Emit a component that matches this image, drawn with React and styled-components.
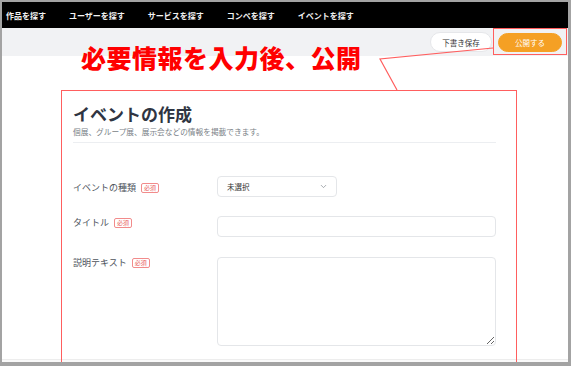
import React from "react";
import styled, { createGlobalStyle } from "styled-components";
import { ChevronDown } from "lucide-react";

const GlobalStyle = createGlobalStyle`
  * { box-sizing: border-box; }
  body {
    margin: 0;
    background: #fff;
    font-family: "Noto Sans CJK JP", "Noto Sans", sans-serif;
  }
`;

const Frame = styled.div`
  position: relative;
  width: 571px;
  height: 366px;
  border: solid #a3a3a3;
  border-width: 2px 3px 4px 2px;
  display: flex;
  flex-direction: column;
  overflow: hidden;
  background: #fff;
`;

const Nav = styled.nav`
  height: 26px;
  flex-shrink: 0;
  background: #000;
  display: flex;
  align-items: center;
  gap: 23px;
  padding-left: 4px;
`;

const NavItem = styled.span`
  color: #f2f2f2;
  font-size: 8px;
  font-weight: 700;
  white-space: nowrap;
`;

const ActionBar = styled.div`
  height: 28px;
  flex-shrink: 0;
  background: #f1f2f4;
  display: flex;
  justify-content: flex-end;
  align-items: center;
  gap: 6px;
  padding-right: 6px;
`;

const Pill = styled.button`
  height: ${(p) => (p.$primary ? 19 : 20)}px;
  width: ${(p) => (p.$primary ? 64 : 62)}px;
  border-radius: 999px;
  border: 1px solid ${(p) => (p.$primary ? "#f5a024" : "#e6e7ea")};
  background: ${(p) => (p.$primary ? "#f5a024" : "#fff")};
  color: ${(p) => (p.$primary ? "#fff" : "#333")};
  font-family: inherit;
  font-size: 7.5px;
  padding: 0;
`;

const Main = styled.main`
  flex: 1;
  padding: 48px 0 0 71px;
`;

const Form = styled.section`
  width: 423px;
`;

const Title = styled.h1`
  margin: 0;
  font-size: 17px;
  line-height: 20px;
  font-weight: 700;
  color: #2f3542;
`;

const Lead = styled.p`
  margin: 1.5px 0 0;
  font-size: 7.7px;
  line-height: 12px;
  color: #7a7f87;
`;

const Divider = styled.hr`
  margin: 4.5px 0 0;
  border: none;
  height: 1px;
  background: #eceef1;
`;

const Row = styled.div`
  display: grid;
  grid-template-columns: 144px 1fr;
  align-items: start;
  margin-top: ${(p) => p.$gap}px;
`;

const Label = styled.div`
  display: flex;
  align-items: center;
  gap: 5px;
  padding-top: ${(p) => p.$top}px;
  font-size: 9px;
  line-height: 12px;
  color: #4d535c;
`;

const Badge = styled.span`
  display: inline-block;
  height: 10px;
  padding: 0 2px;
  border: 1px solid #f28b8b;
  border-radius: 2px;
  font-size: 6px;
  line-height: 8px;
  color: #e85a5a;
`;

const Select = styled.div`
  width: 120px;
  height: 21px;
  border: 1px solid #e4e6e9;
  border-radius: 4px;
  display: flex;
  align-items: center;
  justify-content: space-between;
  padding: 0 8px 0 9px;
  font-size: 7.5px;
  color: #333;
`;

const Input = styled.input`
  display: block;
  width: 279px;
  height: 21px;
  border: 1px solid #e4e6e9;
  border-radius: 4px;
  outline: none;
`;

const TextArea = styled.textarea`
  display: block;
  width: 279px;
  height: 89px;
  border: 1px solid #e4e6e9;
  border-radius: 4px;
  resize: vertical;
  outline: none;
`;

const Footer = styled.div`
  height: 3px;
  flex-shrink: 0;
  border-top: 1px solid #ededed;
  background: #fafafa;
`;

const Callout = styled.div`
  position: absolute;
  left: 79px;
  top: 43px;
  font-size: 25px;
  line-height: 25px;
  font-weight: 900;
  letter-spacing: 0.5px;
  color: #ff0000;
  white-space: nowrap;
`;

const Marker = styled.div`
  position: absolute;
  left: ${(p) => p.$x}px;
  top: ${(p) => p.$y}px;
  width: ${(p) => p.$w}px;
  height: ${(p) => p.$h}px;
  border: 1.5px solid #ff5e5e;
  ${(p) => p.$open && "border-bottom: none;"}
`;

const Leader = styled.svg`
  position: absolute;
  left: 0;
  top: 0;
  width: 566px;
  height: 360px;
  pointer-events: none;
`;

const navItems = ["作品を探す", "ユーザーを探す", "サービスを探す", "コンペを探す", "イベントを探す"];

export default function App() {
  return (
    <>
      <GlobalStyle />
      <Frame>
        <Nav>
          {navItems.map((n) => (
            <NavItem key={n}>{n}</NavItem>
          ))}
        </Nav>
        <ActionBar>
          <Pill>下書き保存</Pill>
          <Pill $primary>公開する</Pill>
        </ActionBar>
        <Main>
          <Form>
            <Title>イベントの作成</Title>
            <Lead>個展、グループ展、展示会などの情報を掲載できます。</Lead>
            <Divider />
            <Row $gap={33}>
              <Label $top={6}>
                イベントの種類<Badge>必須</Badge>
              </Label>
              <Select>
                未選択
                <ChevronDown size={9} color="#8a8f96" strokeWidth={2} />
              </Select>
            </Row>
            <Row $gap={19}>
              <Label $top={1}>
                タイトル<Badge>必須</Badge>
              </Label>
              <Input />
            </Row>
            <Row $gap={20}>
              <Label $top={0}>
                説明テキスト<Badge>必須</Badge>
              </Label>
              <TextArea />
            </Row>
          </Form>
        </Main>
        <Footer />
        <Marker $x={59} $y={88} $w={456} $h={280} $open />
        <Marker $x={491} $y={26} $w={74} $h={27} />
        <Leader viewBox="0 0 566 360">
          <polyline points="491,46 378,57 395,88" fill="none" stroke="#ff5e5e" strokeWidth="1.2" />
        </Leader>
        <Callout>必要情報を入力後、公開</Callout>
      </Frame>
    </>
  );
}
